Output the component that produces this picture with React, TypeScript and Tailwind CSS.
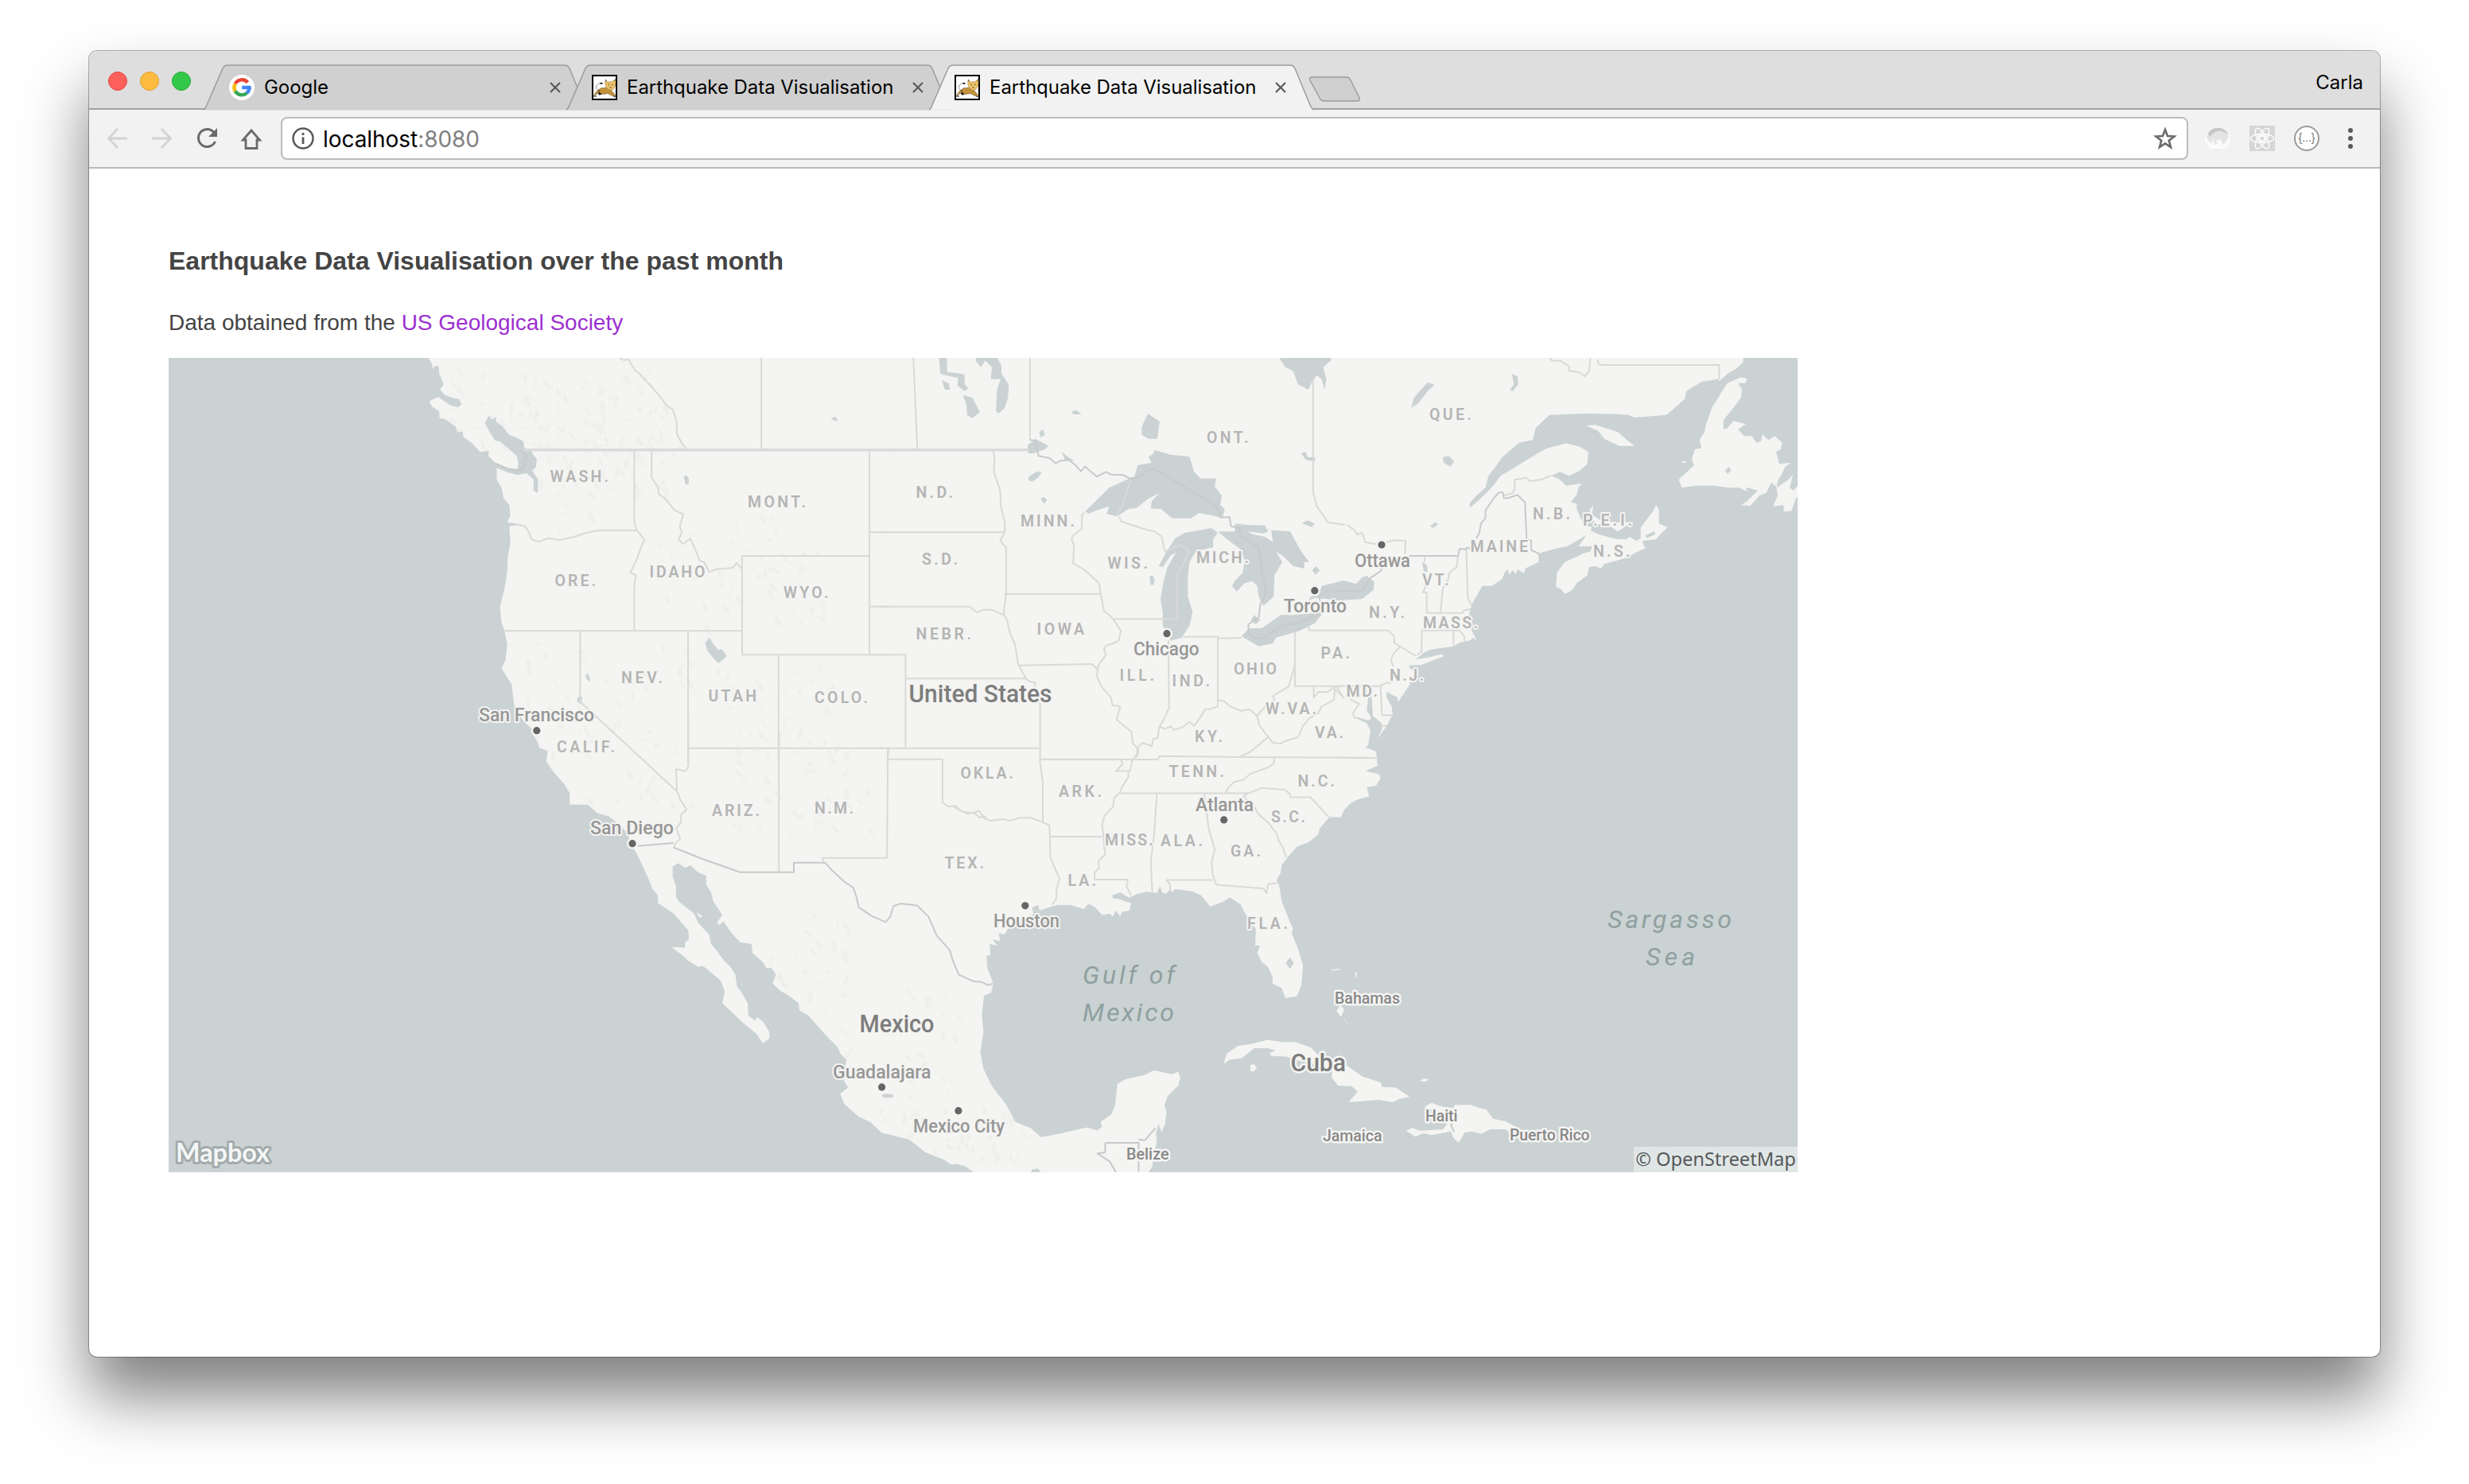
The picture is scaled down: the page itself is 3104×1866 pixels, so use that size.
import React from "react";

type Sheet = (points: string) => string;

/* The map outlines are digitised in sheets; each sheet has its own origin and scale. */
const sheet =
  (ox: number, oy: number, sx: number, sy: number): Sheet =>
  (points) =>
    points
      .trim()
      .split(/\s+/)
      .map((p) => {
        const [x, y] = p.split(",").map(Number);
        return (ox + x / sx).toFixed(1) + "," + (oy + y / sy).toFixed(1);
      })
      .join(" ");

const A = sheet(500, 440, 2.529, 3);
const B = sheet(1100, 440, 2.529, 3);
const C = sheet(1680, 440, 2.6133, 3);
const D = sheet(600, 900, 2.45, 2.6133);
const E = sheet(1200, 900, 2.6133, 2.6133);
const F = sheet(1500, 1200, 2.036, 3);

const mainland = [
  A("98,20 98,30 108,52 112,72 118,60 130,62 132,90 146,130 135,150 150,170 172,180 195,185 203,205 192,216 170,210 150,195 130,178 112,186 100,195 110,215 132,232 133,257 150,260 168,275 183,288 190,310 207,308 208,328 235,350 262,385 290,380 288,400 310,425 345,445 380,450 384,430 378,400 350,370 325,345 310,342 292,310 277,275 290,248 300,262 313,252 312,270 335,290 352,318 385,335 400,345 402,370 425,375 430,395 442,410 440,440 428,455 447,490 445,540 432,530 432,490 410,465 380,472 350,462 314,445 315,490 330,520 337,560 355,585 358,625 348,650 375,655 375,662 355,665 358,730 350,780 348,840 338,910 325,970 330,1030 340,1060 348,1110 343,1170 330,1200 345,1230 362,1260 370,1340 400,1400 428,1430 430,1450 445,1480 450,1500 480,1515"),
  D("217,115 213,150 235,185 268,225 285,255 285,292 340,292 370,320 405,330 440,360 465,390 470,420 490,450 508,490 525,530 540,570 556,590 556,615 605,650 650,705 652,735 640,745 640,762 598,760 630,785 650,805 680,825 695,822 750,870 762,905 755,945 790,980 820,1010 860,1045 880,1077 900,1060 900,1040 880,1005 862,990 855,1002 835,985 833,945 815,910 800,890 795,850 780,825 760,805 740,775 720,750 715,720 680,680 668,650 620,610 612,595 612,560 602,530 602,495 620,485 640,500 657,492 680,515 705,525 705,555 720,580 727,610 755,655 738,680 745,688 758,675 780,710 810,745 845,750 848,780 880,810 890,830 905,828 920,850 910,880 935,905 960,920 990,945 992,968 1020,985 1070,1045 1110,1090 1118,1110 1137,1130 1133,1160 1130,1200 1142,1222 1118,1242 1130,1275 1175,1318 1210,1335 1245,1370 1330,1392 1380,1435 1440,1460 1455,1472 1510,1485 1540,1510"),
  E("632,1510 650,1480 655,1440 665,1400 662,1375 670,1340 680,1368 692,1340 697,1300 690,1280 700,1250 735,1215 742,1190 735,1170 715,1178 655,1165 625,1180 560,1195 535,1210 528,1280 515,1310 480,1335 485,1350 470,1363 435,1353 400,1360 360,1370 285,1385 250,1355 200,1335 168,1275 125,1220 110,1190 95,1160 85,1105 95,1040 90,985 97,920 120,910 128,880 108,830 105,790 118,785 115,750 140,755 125,735 150,740 145,715 165,718 175,700 220,675 260,652 255,630 275,622 280,640 310,630 340,622 380,622 425,635 440,618 460,628 485,655 510,650 520,660 530,640 545,660 550,645 575,640 580,615 560,610 545,603 520,600 518,590 545,580 560,590 575,598 600,585 630,578 665,582 675,560 682,580 695,585 705,572 715,580 725,570 780,577 810,590 840,627 880,612 905,597 940,620 955,650 975,680 990,700 988,755 1003,755 995,780 1010,810 1030,825 1045,860 1045,880 1075,895 1087,928 1125,922 1140,885 1145,820 1130,770 1108,715 1112,700 1095,660 1075,610 1067,560 1058,540 1072,515 1075,490 1095,465 1125,430 1165,415 1195,390 1200,370 1232,333 1270,333 1280,310 1300,288 1325,275 1362,265 1355,235 1385,230 1400,205 1395,192 1350,182 1390,165 1385,118"),
  C("132,1515 95,1500 105,1490 112,1435 100,1408 75,1395 68,1385 108,1398 115,1388 100,1360 105,1310 115,1290 120,1380 150,1410 150,1430 135,1468 165,1420 185,1375 182,1345 165,1310 165,1290 200,1310 203,1328 240,1265 245,1240 265,1215 240,1200 240,1190 280,1188 355,1155 345,1148 300,1160 260,1168 290,1140 310,1130 385,1118 405,1105 440,1095 450,1085 462,1097 455,1080 445,1060 435,1000 445,960 480,890 510,890 545,865 555,835 565,830 568,848 580,830 590,845 595,828 618,843 620,825 665,800 665,785 672,765 720,750 760,740 820,700 815,710 795,742 840,740 835,760 810,768 790,780 750,800 725,840 722,895 735,900 752,920 775,905 790,880 825,850 830,820 850,815 870,825 880,808 950,785 1000,755 1015,750 1005,720 1050,715 1065,695 1088,670 1060,655 1060,600 1050,585 1040,610 1000,670 1000,710 985,720 965,705 950,715 920,713 860,695 835,680 840,668 825,665 805,640 790,600 790,580 770,575 790,545 795,520 808,503 755,512 745,500 730,485 705,475 735,460 765,475 800,455 825,430 828,385 800,365 755,352 690,372 640,405 590,440 540,475 510,520 470,565 440,595 437,580 460,550 490,520 500,475 530,430 545,405 600,350 645,340 655,295 700,245 820,240 920,242 960,245 980,255 1085,245 1145,185 1150,155 1200,120 1255,110 1258,118 1285,90 1315,70 1337,45 1337,20"),
].join(" ");

const islands = [
  C("1265,160 1285,125 1330,103 1350,108 1345,125 1320,125 1333,150 1330,180 1300,225 1272,265 1272,300 1285,295 1305,268 1345,280 1320,300 1340,325 1365,325 1380,350 1395,345 1400,318 1420,340 1440,325 1465,350 1460,375 1445,385 1455,430 1495,425 1475,440 1465,465 1450,495 1447,520 1485,490 1500,472 1490,520 1500,530 1520,510 1520,550 1510,560 1495,608 1470,610 1470,585 1435,590 1450,550 1445,515 1430,500 1412,540 1390,550 1360,588 1330,585 1350,570 1385,530 1345,518 1350,535 1325,520 1290,520 1240,512 1180,512 1135,520 1125,490 1175,435 1168,410 1178,375 1200,370 1193,340 1210,310 1215,280 1235,215 1250,190"),
  C("820,285 850,283 900,300 925,310 960,345 980,362 930,362 880,335 860,305"),
  C("832,605 845,585 840,620 870,645 920,650 970,650 925,685 900,665 850,655"),
  C("1133,423 1145,418 1150,424 1145,427"),
  E("883,1145 895,1110 930,1085 975,1078 1030,1065 1075,1072 1120,1072 1170,1090 1210,1130 1290,1150 1340,1185 1400,1205 1405,1220 1450,1222 1495,1252 1460,1260 1440,1270 1395,1262 1295,1270 1325,1235 1305,1218 1260,1215 1240,1190 1240,1165 1200,1150 1120,1130 1090,1120 1040,1118 1035,1108 1055,1100 1030,1092 985,1092 945,1125 905,1130"),
  E("972,1148 985,1145 993,1158 985,1168 972,1168"),
  E("1255,970 1268,950 1280,965 1270,990"),
  E("1278,990 1294,1015 1285,1005"),
  E("1316,842 1321,842 1321,858 1316,858"),
  E("1237,834 1268,832 1268,835 1240,837"),
  F("580,478 590,468 602,470 597,480"),
  F("592,575 610,560 640,575 665,580 670,568 710,568 730,578 750,585 768,620 800,630 825,650 835,670 810,672 800,660 760,660 738,677 715,668 695,672 680,712 665,690 660,668 610,682 590,675 568,688 545,665 560,655 580,665 640,660 650,640 640,610 620,590"),
  F("345,690 370,680 440,690 480,705 420,708"),
  D("675,645 685,652 694,660 685,663"),
];

const lakes = [
  B("668,610 745,520 800,490 825,480 835,435 880,425 870,405 885,390 890,378 940,395 1000,403 1015,460 1035,485 1085,485 1080,515 1103,550 1098,585 1112,600 1105,635 1075,625 1030,615 1005,635 945,635 910,600 877,598 880,570 905,540 870,560 830,597 805,600 770,628 737,618 745,590 710,603 680,617"),
  B("985,690 1010,685 1070,672 1090,690 1075,715 1075,745 1020,760 1000,800 995,850 995,930 1010,990 1000,1040 975,1085 940,1097 925,1060 915,1040 915,990 908,940 918,870 930,820 957,765 940,775 915,820 902,815 930,755 955,710"),
  B("1090,685 1145,685 1145,655 1180,660 1240,662 1250,685 1235,692 1185,685 1200,695 1240,705 1265,725 1260,680 1320,685 1355,760 1380,800 1365,800 1365,825 1330,815 1300,780 1275,760 1295,800 1270,850 1268,930 1235,965 1220,930 1215,890 1200,872 1175,880 1150,912 1135,890 1145,870 1170,840 1175,790 1160,750 1120,715"),
  B("1205,1000 1225,1020 1210,1035 1195,1020"),
  B("1165,1080 1190,1050 1230,1050 1290,1000 1330,1000 1370,995 1425,990 1400,1030 1350,1060 1275,1085 1265,1107 1220,1118"),
  B("1378,945 1390,925 1415,910 1420,890 1490,870 1530,882") + " " + C("85,858 100,852 125,875 122,905 85,940 0,945") + " " + B("1440,940 1400,935"),
  B("848,290 868,240 905,270 898,335 870,335 848,320"),
  B("203,20 228,20 230,85 245,85 285,92 285,130 297,145 285,155 262,135 265,105 240,100 208,90"),
  B("213,115 235,125 238,150 222,150"),
  B("280,170 310,180 333,235 310,258 293,245 290,205"),
  B("320,20 385,20 402,60 402,90 425,130 423,180 412,220 393,240 385,230 388,150 400,110 368,110 372,65 350,40 338,65 322,45"),
  B("487,390 485,360 510,335 525,345 552,362 540,375 505,390"),
  B("522,310 535,300 540,320 527,330"),
  B("593,385 615,405 635,420 605,415"),
  B("487,490 490,478 515,458 530,462 520,480 500,497"),
  B("527,560 537,555 547,565 540,578 533,575"),
  B("627,230 640,228 657,243 630,243"),
  B("1280,20 1450,20 1450,40 1425,65 1435,110 1430,150 1420,110 1405,95 1390,120 1378,150 1345,130 1330,80 1305,65"),
  B("1355,390 1370,385 1375,405 1400,405 1398,420 1370,415"),
  B("1357,655 1375,643 1398,655 1390,668"),
  B("1390,830 1402,816 1415,832 1400,848"),
  B("873,855 883,850 890,870 885,888 876,885"),
  C("246,220 255,180 300,122 323,132 300,155 270,200"),
  C("577,90 595,100 598,130 580,155 570,152 583,130"),
  C("350,405 370,400 387,420 375,440 352,425"),
  C("308,665 325,650 335,658 318,672"),
  C("282,800 298,812 300,838 287,835"),
  C("1277,455 1290,440 1297,455 1285,468"),
  C("1015,700 1045,685 1048,695 1020,710"),
  A("977,1105 992,1085 1005,1112 1020,1132 1030,1128 1046,1155 1020,1182 1005,1165 985,1135"),
  A("910,478 918,473 925,485 925,507 915,508"),
  A("1377,258 1392,252 1400,268 1388,268"),
  A("597,1228 605,1220 613,1250 602,1245"),
  A("572,1312 580,1306 587,1312 583,1337 570,1325"),
  E("1088,812 1102,795 1115,812 1102,832"),
  D("1245,1247 1255,1243 1280,1244 1280,1254 1252,1256"),
  E("0,1472 35,1480 60,1502 0,1502"),
  E("250,1502 255,1490 275,1488 285,1502"),
];

const stateLines = [
  A("705,30 718,38 735,36 740,50 757,80 765,85 780,105 800,130 830,170 855,210 875,225 887,270 888,318 905,355 920,375"),
  A("1156,30 1156,378"),
  A("752,378 752,650 760,680 784,715 772,750 760,790 740,840 757,850 752,890 752,1060"),
  A("807,378 807,480 828,520 830,545 850,560 880,605 908,620 897,665 903,690 893,715 907,732 930,712 945,750 960,795 975,800 990,838 1010,828 1065,822 1078,803 1095,828"),
  A("1500,378 1500,1150"),
  A("1500,688 1570,688"),
  A("1095,777 1500,777"),
  A("1095,777 1095,1150 1570,1150"),
  A("1500,968 1570,968"),
  A("375,658 405,665 418,690 425,715 448,724 480,710 515,717 560,705 600,690 640,680 760,680"),
  A("340,1060 1095,1060"),
  A("580,1060 580,1320") + " " + D("320,-43 615,248"),
  A("923,1060 923,1560"),
  A("1211,1150 1211,1560"),
  A("923,1502 1570,1502"),
  A("1560,1502 1557,1560"),
  D("650,0 650,165 642,182 612,175 615,245 625,275 645,308 628,325 627,350 613,370 625,405 610,420 605,435"),
  D("929,60 929,514"),
  D("1265,107 1262,467 1062,467 1068,483"),
  D("1265,143 1433,143 1433,285 1450,298 1475,297 1485,310 1510,322 1530,318 1548,335 1568,330"),
  E("0,300 25,315 60,320 80,312 100,338 120,345 160,340 180,345 215,335 250,335 290,350"),
  B("122,30 135,378"),
  B("493,30 493,340"),
  B("375,378 380,410 378,460 398,530 400,590 413,650 413,688"),
  B("0,688 413,688"),
  B("413,688 398,720 417,745 417,920"),
  B("0,968 300,968 325,990 345,980 370,980 410,1000"),
  B("412,920 720,920"),
  B("417,920 412,965 410,995 420,1020 430,1070 445,1110 450,1145 455,1185 480,1240 492,1250 510,1255 508,1275 525,1320 525,1545"),
  B("455,1190 690,1185 708,1205"),
  B("0,1150 97,1150 97,1502"),
  B("97,1240 480,1240"),
  B("0,1502 523,1502"),
  B("523,1545 780,1545"),
  B("665,612 658,625 658,675 630,700 625,715 633,735 630,805 660,825 685,850 712,880 718,920 728,985 750,1005 760,1020 782,1060 775,1095 765,1103 735,1115 728,1130 735,1150 710,1190 705,1230 720,1270 750,1310 755,1340 780,1345 768,1395 815,1440 820,1485 838,1505 835,1530 815,1548"),
  B("775,630 785,648 815,660 870,680 890,685 912,705 918,745 925,765"),
  B("760,1015 960,1015 962,850 1000,760 970,735 925,760"),
  B("768,628 790,580 815,480"),
  B("933,1095 935,1350 920,1390 905,1420 898,1465 885,1468 880,1495 850,1482 835,1500"),
  B("980,1082 1090,1082 1090,1320"),
  B("1090,1088 1165,1086"),
  B("905,1420 920,1430 940,1420 950,1433 975,1425 1000,1403 1015,1418 1035,1385 1050,1355 1065,1355 1090,1345 1090,1320 1110,1325 1130,1345 1165,1362 1190,1355 1215,1380 1222,1415 1250,1460 1220,1490 1195,1515 1160,1535"),
  B("1215,1380 1240,1345 1270,1320 1265,1305 1315,1270 1335,1190 1335,1065"),
  B("1335,1185 1335,1268 1490,1268"),
  B("1378,1040 1380,1058 1470,1058"),
  B("1250,1460 1265,1482 1290,1485 1305,1475 1345,1462 1360,1420 1380,1390 1410,1370 1420,1345 1460,1320 1462,1280 1490,1310"),
  B("1395,1268 1395,1312 1410,1290 1440,1290 1465,1270"),
  B("780,1545 900,1545 905,1532 1160,1536 1570,1538"),
  B("1393,110 1393,540 1405,590 1440,650 1495,660"),
  C("35,660 60,680 68,697 85,690 95,725 125,732 165,725 190,718 228,720 225,770"),
  C("0,1058 170,1058 190,1080 190,1105 210,1118 240,1140 262,1155"),
  C("210,1118 185,1150 180,1175 188,1195"),
  C("281,1058 280,1140 265,1150"),
  C("281,1058 405,1058 420,1080 422,1102"),
  C("385,1058 385,1115"),
  C("297,992 415,992 420,982 442,978"),
  C("290,777 290,800"),
  C("290,840 292,895 285,915 297,915 297,992"),
  C("342,992 350,900 368,865 372,840 395,820 400,777"),
  C("427,750 432,935 445,965"),
  C("550,550 580,540 587,520 585,490 625,482 635,495 670,490 705,475"),
  C("860,35 860,50 870,57 1258,57 1258,112"),
  C("700,30 710,42 735,40 765,62 765,78 800,85 815,100 830,80 835,30"),
  C("145,1265 150,1378 185,1378"),
  C("0,1268 145,1268 165,1255 180,1257"),
  C("0,1268 25,1315"),
  C("45,1318 75,1335 55,1370 60,1388 75,1390"),
  C("150,1418 165,1418"),
  C("0,1538 132,1540"),
  E("280,143 545,143 553,158 530,182 570,182 572,200 550,235 545,250 525,270 520,300 492,330 485,360 490,400 492,430 495,455 472,480 475,500 460,515 460,538 570,538 565,560 580,590"),
  E("600,105 600,125 585,145 575,185"),
  E("545,255 965,255"),
  E("665,255 655,400 645,480 650,578"),
  E("280,143 290,220 290,350 312,360 315,465 325,490 345,535 335,570 335,600 320,622"),
  E("315,397 485,397"),
  E("820,255 835,370 855,440 845,480 848,520 860,555 1015,568 1025,583 1030,553 1060,550"),
  E("710,578 708,555 697,540 850,540"),
  E("890,255 900,235 920,217 950,210 970,192 1000,180 1035,168 1050,155 1050,140"),
  E("965,255 950,265 985,300 1000,325 1030,350 1060,390 1065,410 1080,435 1090,465"),
  E("965,255 1010,237 1085,243 1100,255 1105,268 1170,268 1230,333"),
];

const parallel49 = [A("400,377 1570,377"), B("40,377 490,377")];

const nationLines = [
  A("310,428 350,448 388,455 405,435 400,420 410,400 390,377"),
  D("495,428 605,418"),
  D("605,433 700,473 810,514 975,514 975,483 1072,483 1090,505 1130,545 1158,565 1168,595 1175,630 1190,640 1215,658 1258,678 1272,660 1282,625 1305,617 1355,624 1390,660 1400,685 1415,722 1455,770 1465,805 1483,850") + " " + E("60,872 90,875 110,885 127,880"),
  B("493,340 510,342 515,370 520,400 555,408 575,428 590,418 615,415 635,432 655,458 668,440 705,478 735,460 750,470 790,472 810,485 835,480 865,455 890,450 910,465 1085,588 1100,632 1127,630 1132,665 1160,672 1162,700 1220,745 1232,850 1242,900 1240,925 1225,960 1220,1010 1187,1035 1187,1070 1210,1088 1235,1088 1290,1042 1350,1028 1425,990 1412,930 1440,908 1467,908") + " " + C("85,908 112,860 145,835 152,820"),
  C("240,777 400,777 405,750 425,752 430,745 440,750"),
  C("460,712 470,690 475,655 490,635 490,605 520,555 535,537 547,537 550,558 560,560 595,547 620,575 625,712 640,720 640,755 665,768 672,795"),
  E("495,1403 605,1403 605,1498"),
  E("605,1393 625,1395 660,1355"),
  E("495,1403 495,1435 470,1438 510,1465 530,1500"),
  F("665,580 675,600 660,645 668,670"),
];

/* Faint relief over the mountain ranges: x, y, width, height, count */
const ranges: [number, number, number, number, number][] = [
  [560, 460, 280, 110, 100],
  [640, 500, 220, 120, 50],
  [700, 600, 60, 80, 10],
  [820, 640, 160, 150, 30],
  [960, 690, 80, 100, 20],
  [660, 800, 80, 160, 24],
  [740, 810, 130, 200, 36],
  [900, 830, 170, 140, 44],
  [900, 960, 200, 90, 24],
  [960, 1140, 130, 200, 40],
  [1130, 1240, 80, 180, 26],
  [1090, 1390, 200, 65, 40],
];

function buildRelief() {
  let seed = 7;
  const rnd = () => {
    seed = (seed * 16807) % 2147483647;
    return seed / 2147483647;
  };
  let d = "";
  for (const [x, y, w, h, n] of ranges) {
    for (let i = 0; i < n; i++) {
      const px = x + rnd() * w;
      const py = y + rnd() * h;
      const dx = (rnd() - 0.35) * 16;
      const dy = 3 + rnd() * 12;
      const fat = 2 + rnd() * 4;
      d += `M${px.toFixed(1)} ${py.toFixed(1)}q${(dx * 0.1 + fat).toFixed(1)} ${(dy * 0.4).toFixed(1)} ${dx.toFixed(1)} ${dy.toFixed(1)}q${(-dx * 0.8 - fat).toFixed(1)} ${(-dy * 0.3).toFixed(1)} ${(-dx).toFixed(1)} ${(-dy).toFixed(1)}z`;
    }
  }
  return d;
}
const relief = buildRelief();

type Label = [string, number, number, number];

const stateLabels: Label[] = [
  ["WASH.", 692.5, 764, 606],
  ["MONT.", 941, 1012, 638],
  ["ORE.", 698.5, 748, 737],
  ["IDAHO", 817.5, 885.5, 726],
  ["WYO.", 986, 1040.5, 752],
  ["NEV.", 782, 832, 859],
  ["UTAH", 891.5, 950, 882],
  ["COLO.", 1025, 1090, 884],
  ["CALIF.", 701, 772, 946],
  ["N.D.", 1152.5, 1197, 626],
  ["S.D.", 1160, 1203, 710],
  ["NEBR.", 1152.5, 1220, 804],
  ["IOWA", 1304.5, 1362, 798],
  ["MINN.", 1284, 1350, 662],
  ["WIS.", 1393.5, 1442, 715],
  ["MICH.", 1505, 1569, 708],
  ["ONT.", 1518, 1568.5, 557],
  ["ILL.", 1408.5, 1450, 856],
  ["IND.", 1474.5, 1520, 863],
  ["OHIO", 1552, 1604, 848],
  ["PA.", 1661.5, 1696, 828],
  ["W.VA.", 1592, 1654, 898],
  ["VA.", 1654, 1688, 928],
  ["KY.", 1503, 1536, 933],
  ["QUE.", 1798, 1849, 528],
  ["N.B.", 1928, 1973, 653],
  ["P.E.I.", 1991, 2051, 661],
  ["MAINE", 1849.5, 1920, 694],
  ["N.S.", 2004, 2048.5, 700],
  ["VT.", 1789, 1820.5, 736],
  ["N.Y.", 1722, 1765, 777],
  ["MASS.", 1790, 1857, 790],
  ["N.J.", 1748, 1789, 856],
  ["MD.", 1693.5, 1731, 876],
  ["ARIZ.", 896, 954, 1026],
  ["N.M.", 1025, 1072, 1023],
  ["TEX.", 1188.5, 1236, 1091.5],
  ["OKLA.", 1208.5, 1273, 979],
  ["ARK.", 1332, 1384, 1002],
  ["TENN.", 1470.5, 1538, 976.5],
  ["N.C.", 1632.5, 1677, 989],
  ["S.C.", 1599, 1640, 1034],
  ["MISS.", 1390, 1449, 1063],
  ["ALA.", 1460, 1511, 1064],
  ["GA.", 1548, 1584, 1077],
  ["LA.", 1343.5, 1377, 1114],
  ["FLA.", 1569, 1618, 1167.5],
];

const cityLabels: Label[] = [
  ["San Francisco", 603, 746, 907],
  ["San Diego", 743, 846, 1048.5],
  ["Guadalajara", 1048, 1169.5, 1355.5],
  ["Mexico City", 1149, 1262, 1423.5],
  ["Houston", 1250, 1331, 1166],
  ["Atlanta", 1504, 1575, 1020],
  ["Chicago", 1426, 1506.5, 824],
  ["Toronto", 1615, 1692, 770],
  ["Ottawa", 1704, 1772, 713],
];

const countryLabels: Label[] = [
  ["United States", 1143.5, 1321.5, 882.5],
  ["Mexico", 1081.5, 1173.5, 1298],
  ["Cuba", 1623.5, 1691, 1347],
];

const smallCountryLabels: Label[] = [
  ["Bahamas", 1679, 1759, 1261.5],
  ["Jamaica", 1664, 1736.5, 1435],
  ["Belize", 1417, 1468.5, 1458],
  ["Haiti", 1793, 1831.5, 1410],
  ["Puerto Rico", 1899, 1997.5, 1434],
];

const seaLabels: Label[] = [
  ["Gulf of", 1362, 1476, 1237],
  ["Mexico", 1362, 1475, 1284],
  ["Sargasso", 2022, 2176, 1167],
  ["Sea", 2070, 2130, 1214],
];

const dots: [number, number][] = [
  [674.8, 918.7],
  [795, 1060.7],
  [1108.6, 1366.9],
  [1204.9, 1396.7],
  [1288.8, 1138.8],
  [1538.7, 1030.9],
  [1467, 796.7],
  [1652.8, 742.7],
  [1737, 685],
];

function Labels({ items, className, squeeze }: { items: Label[]; className: string; squeeze?: boolean }) {
  return (
    <g className={className} strokeLinejoin="round" style={{ paintOrder: "stroke" }}>
      {items.map(([text, x0, x1, y]) => (
        <text
          key={text + x0}
          x={x0 - 1}
          y={y}
          textLength={x1 - x0 + 2}
          lengthAdjust={squeeze ? "spacingAndGlyphs" : "spacing"}
        >
          {text}
        </text>
      ))}
    </g>
  );
}

function MapView() {
  return (
    <div className="relative h-[1024px] w-[2048px] overflow-hidden bg-[#cad2d3]">
      <svg className="block" width="2048" height="1024" viewBox="212 450 2048 1024">
        <clipPath id="land">
          <polygon points={mainland} />
        </clipPath>
        <g className="fill-[#f4f4f2]">
          <polygon points={mainland} />
          {islands.map((p) => (
            <polygon key={p} points={p} />
          ))}
        </g>
        <path d={relief} clipPath="url(#land)" className="fill-[#eeeeec] stroke-[#f0f0ee] stroke-[1.500]" />
        <g className="fill-[#cad2d3]">
          {lakes.map((p) => (
            <polygon key={p} points={p} />
          ))}
        </g>
        <g className="fill-none stroke-[#d9d9d8] stroke-2" strokeLinejoin="round">
          {stateLines.map((p) => (
            <polyline key={p} points={p} />
          ))}
        </g>
        <g className="fill-none stroke-[#dadada] stroke-[3.500]">
          {parallel49.map((p) => (
            <polyline key={p} points={p} />
          ))}
        </g>
        <g className="fill-none stroke-[#c8caca] stroke-2" strokeLinejoin="round">
          {nationLines.map((p) => (
            <polyline key={p} points={p} />
          ))}
        </g>
        <g className="fill-[#666] stroke-[#f4f4f2] stroke-[5]" style={{ paintOrder: "stroke" }}>
          {dots.map(([x, y]) => (
            <circle key={x} cx={x} cy={y} r={4.6} />
          ))}
        </g>
        <Labels
          items={stateLabels}
          className="fill-[#b4b4b4] stroke-[#f4f4f2] stroke-[4] font-['Roboto'] text-[19.5px] font-semibold"
        />
        <Labels
          squeeze
          items={cityLabels}
          className="fill-[#979797] stroke-[#f4f4f2] stroke-[4] font-['Roboto'] text-[23.5px] font-medium"
        />
        <Labels
          squeeze
          items={smallCountryLabels}
          className="fill-[#888] stroke-[#f4f4f2] stroke-[5] font-['Roboto'] text-[20px] font-medium"
        />
        <Labels
          squeeze
          items={countryLabels}
          className="fill-[#7d7d7d] stroke-[#f4f4f2] stroke-[5] font-['Roboto'] text-[31px] font-medium"
        />
        <Labels
          items={seaLabels}
          className="fill-[#8fa09f] stroke-none font-['Roboto'] text-[32px] font-normal italic"
        />
        <text
          x="221"
          y="1461"
          textLength="118"
          lengthAdjust="spacingAndGlyphs"
          strokeLinejoin="round"
          style={{ paintOrder: "stroke" }}
          className="fill-[#f4f6f6] stroke-[#a3abab] stroke-[6] font-['Lato'] text-[33px] font-bold"
        >
          Mapbox
        </text>
      </svg>
      <div className="absolute right-0 bottom-0 flex h-8 w-[206px] items-center justify-center bg-[#e0e6e6] font-['Noto_Sans'] text-[23.6px] whitespace-nowrap text-[#56595a]">
        © OpenStreetMap
      </div>
    </div>
  );
}

function GoogleIcon() {
  return (
    <svg className="h-8 w-8" viewBox="0 0 32 32">
      <circle cx="16" cy="16" r="16" fill="#fff" />
      <g fill="none" strokeWidth="4.4">
        <path d="M23.4 9.6A9.6 9.6 0 0 0 7.7 11.3" stroke="#ea4335" />
        <path d="M7.7 11.3a9.6 9.6 0 0 0 0 9.4" stroke="#fbbc05" />
        <path d="M7.7 20.7a9.6 9.6 0 0 0 14.7 2.2" stroke="#34a853" />
        <path d="M22.4 22.9a9.6 9.6 0 0 0 3.1-7" stroke="#4285f4" />
      </g>
      <path d="M16.2 13.8h11.2a11 11 0 0 1 .2 4.4H16.2z" fill="#4285f4" />
    </svg>
  );
}

function TomcatIcon() {
  return (
    <svg className="h-8 w-8" viewBox="0 0 32 32">
      <rect x="1" y="1" width="30" height="30" fill="#fff" stroke="#000" strokeWidth="2" />
      <path d="M10 21c-4-2-6-5-3.500-8 1.500-2 4-3 6-2" fill="none" stroke="#888" strokeWidth="1" />
      <path d="M10 10.500l3-.8.8 1.500-2.500.8z" fill="#111" />
      <path d="M2 27l4-6 5-4 8-1 4 2 7 8v1.500l-4-1-6-3-6 1-4-1-4 0-2 3z" fill="#c4923a" stroke="#8d7444" strokeWidth=".8" />
      <path d="M17 7l2 2h6L30 6l-.5 8-3 4.500-3.500 1-4-2.500-2-5z" fill="#ecc468" stroke="#b58d42" strokeWidth=".8" />
      <path d="M17 6l1.500 2M30 5.500l-1.500 2M20.500 12l1.500 1M26.500 12l-1.500 1M22.500 16h2" stroke="#333" strokeWidth="1" />
      <path d="M8 19l2 2M9 22l3 2.500-3 .5z" stroke="#111" fill="#111" strokeWidth="1" />
      <path d="M2 27h4M27 27.300h3" stroke="#667" strokeWidth="1.500" />
    </svg>
  );
}

function Tab({ title, icon, active }: { title: string; icon: React.ReactNode; active?: boolean }) {
  return (
    <div className={`relative -mr-7 flex h-[57px] w-[484px] items-center pl-8 ${active ? "z-10" : ""}`}>
      <svg className="absolute inset-0 h-[58px] w-[484px]" viewBox="0 0 484 58">
        <path
          d="M0 57.500C2 56 3 54 4 51L24 5Q26 1 30 1H454Q458 1 460 5L479 51Q481 56 484 57.500Z"
          className={active ? "fill-[#f2f2f2]" : "fill-[#d0d0d0]"}
        />
        <path
          d="M0 57C2 56 3 54 4 51L24 5Q26 1 30 1H454Q458 1 460 5L479 51Q481 56 484 57"
          className="fill-none stroke-[#9c9c9c] stroke-[1.500]"
        />
      </svg>
      <div className="relative flex w-[418px] items-center">
        {icon}
        <span className="ml-3 flex-1 font-['Inter'] text-[24px] leading-8 tracking-[-0.05px] text-black">{title}</span>
        <svg className="h-4 w-4" viewBox="0 0 16 16">
          <path d="M2 2l12 12M14 2L2 14" className="stroke-[#5a5a5a] stroke-[2.200]" />
        </svg>
      </div>
    </div>
  );
}

function TitleBar() {
  return (
    <div className="flex h-[74px] items-end border-b-2 border-[#a2a2a2] bg-[#dedede]">
      <div className="flex w-36 gap-4 self-stretch pt-[26px] pl-6">
        <span className="h-6 w-6 rounded-full border border-[#e2463f] bg-[#fc605c]" />
        <span className="h-6 w-6 rounded-full border border-[#dfa023] bg-[#fdbc40]" />
        <span className="h-6 w-6 rounded-full border border-[#24a936] bg-[#34c84a]" />
      </div>
      <div className="-mb-[2px] flex">
        <Tab title="Google" icon={<GoogleIcon />} />
        <Tab title="Earthquake Data Visualisation" icon={<TomcatIcon />} />
        <Tab title="Earthquake Data Visualisation" icon={<TomcatIcon />} active />
        <svg className="ml-[21px] h-[57px] w-[66px]" viewBox="0 0 66 57">
          <path
            d="M4 16H47Q51 16 52.500 19L64 42Q65 46 62 46H20Q16 46 14.500 43L2 20Q1 16 4 16Z"
            className="fill-[#d0d0d0] stroke-[#9c9c9c] stroke-[1.500]"
          />
        </svg>
      </div>
      <span className="mr-[21px] ml-auto pb-[17px] font-['Inter'] text-[24px] leading-[30px] text-black">Carla</span>
    </div>
  );
}

function Toolbar() {
  return (
    <div className="flex h-[74px] items-center border-b-2 border-[#b9b9b9] bg-[#f2f2f2]">
      <div className="ml-[21px] flex gap-6 fill-none">
        <svg className="h-8 w-8" viewBox="0 0 32 32">
          <path d="M27 16H3.500M15 4L3.500 16L15 28" className="stroke-[#d3d3d3] stroke-[2.800]" />
        </svg>
        <svg className="h-8 w-8" viewBox="0 0 32 32">
          <path d="M2 16H25.500M14 4L25.500 16L14 28" className="stroke-[#d3d3d3] stroke-[2.800]" />
        </svg>
        <svg className="h-8 w-8" viewBox="0 0 32 32">
          <path d="M24 8.500A11 11 0 1 0 25.500 20" className="stroke-[#6a6a6a] stroke-[3]" />
          <path d="M28 3V14H17Z" className="fill-[#6a6a6a]" />
        </svg>
        <svg className="h-8 w-8" viewBox="0 0 32 32">
          <path d="M4.500 18L15 6L25.500 18H22V28.500H8V18Z" className="stroke-[#6a6a6a] stroke-[2.800]" />
        </svg>
      </div>
      <div className="ml-5 flex h-[54px] w-[2398px] items-center rounded-lg border-2 border-[#bcbcbc] bg-white pl-3">
        <svg className="h-7 w-7 fill-none" viewBox="0 0 28 28">
          <circle cx="14" cy="14" r="12.500" className="stroke-[#5a5a5a] stroke-[2.500]" />
          <path d="M14 12.500V21M14 7V10" className="stroke-[#5a5a5a] stroke-[2.800]" />
        </svg>
        <span className="mt-[2px] ml-[11px] font-['Inter'] text-[28px] leading-8 tracking-[-0.05px] text-black">
          localhost<span className="text-[#808080]">:8080</span>
        </span>
        <svg className="mr-[11px] ml-auto h-8 w-8 fill-none" viewBox="0 0 32 32">
          <path
            d="M16 5l3 8 8.500.5-6.700 5.300L23 27l-7-4.700L9 27l2.200-8.200L4.500 13.500 13 13z"
            className="stroke-[#6a6a6a] stroke-[2.600]"
          />
        </svg>
      </div>
      <div className="ml-[21px] flex items-center gap-6">
        <svg className="h-8 w-8" viewBox="0 0 32 32">
          <circle cx="16" cy="17" r="14" fill="#e4e4e4" />
          <path d="M4 10a14 14 0 0 1 25 1C20 4 12 6 6 14z" fill="#c6c6c6" />
          <path d="M1 10C-1 18 1 25 8 29.500H24C32 25 33 17 30 10C29 18 26 22 22 24C22 21 21 19 19 17L14 19L16 22L13 24C10 22 12 19 11 16C9 19 10 21 9 22C5 20 2 16 1 10Z" fill="#fbfbfb" />
        </svg>
        <svg className="h-8 w-8 fill-none" viewBox="0 0 32 32">
          <rect width="32" height="32" fill="#d6d6d6" />
          <g className="stroke-white stroke-[1.400]">
            <ellipse cx="16" cy="16" rx="14.500" ry="5.500" />
            <ellipse cx="16" cy="16" rx="14.500" ry="5.500" transform="rotate(60 16 16)" />
            <ellipse cx="16" cy="16" rx="14.500" ry="5.500" transform="rotate(120 16 16)" />
          </g>
          <circle cx="16" cy="16" r="3.500" className="stroke-white stroke-[2]" />
        </svg>
        <div className="flex h-8 w-8 items-center justify-center rounded-full border-2 border-[#9a9a9a] bg-white pb-[3px] font-['Liberation_Sans'] text-[14px] leading-none text-[#777]">
          {"{...}"}
        </div>
      </div>
      <div className="ml-9 flex flex-col gap-1">
        <span className="h-[6px] w-[6px] rounded-full bg-[#5a5a5a]" />
        <span className="h-[6px] w-[6px] rounded-full bg-[#5a5a5a]" />
        <span className="h-[6px] w-[6px] rounded-full bg-[#5a5a5a]" />
      </div>
    </div>
  );
}

export default function App() {
  return (
    <div className="flex h-[1866px] w-[3104px] justify-center overflow-hidden bg-white pt-16">
      <div className="h-[1642px] w-[2880px] overflow-hidden rounded-[10px] bg-white shadow-[0_0_0_1px_rgba(0,0,0,0.3),0_50px_80px_rgba(0,0,0,0.5)]">
        <TitleBar />
        <Toolbar />
        <main className="flex flex-col pl-[100px] font-['Liberation_Sans']">
          <h1 className="mt-24 text-[32px] leading-10 font-bold text-[#444]">
            Earthquake Data Visualisation over the past month
          </h1>
          <p className="mt-5 mb-[18px] pt-3 text-[28px] leading-[52px] text-[#444]">
            Data obtained from the <a className="text-[#9b30d0]">US Geological Society</a>
          </p>
          <MapView />
        </main>
      </div>
    </div>
  );
}
